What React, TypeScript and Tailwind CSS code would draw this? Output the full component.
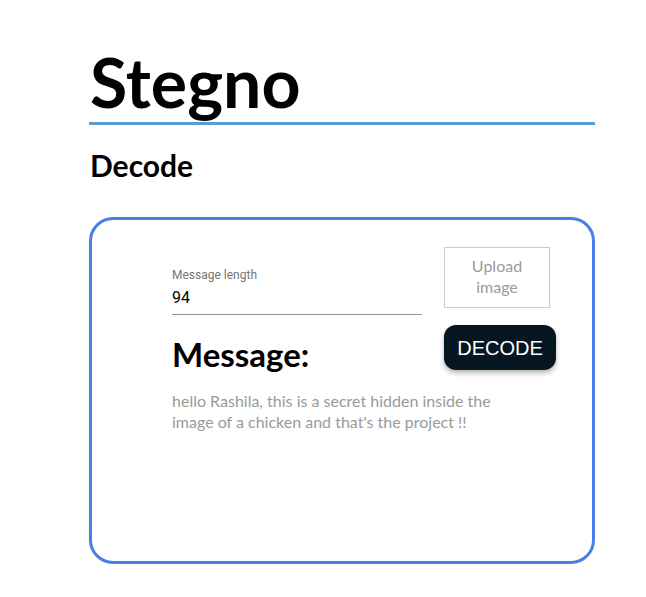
import React from 'react';

const segoe = { fontFamily: 'Lato, "Noto Sans", sans-serif' };

export default function App() {
  return (
    <div className="min-h-screen bg-white pl-[89px] pt-[48px]">
      <div className="w-[506px]">
        <h1
          className="border-b-[3px] border-[#5b9bd5] pb-[6px] pl-[1px] text-[68px] font-bold leading-[68px] text-black"
          style={segoe}
        >
          Stegno
        </h1>
        <h2 className="mt-[22px] pl-[1px] text-[30px] font-bold leading-[36px] text-black" style={segoe}>
          Decode
        </h2>

        <div className="mt-[34px] h-[347px] rounded-[24px] border-[3px] border-[#4a7fe5] pl-[80px] pt-[27px]">
          <div className="flex items-start gap-[22px]">
            <div className="w-[250px] pt-[21px]" style={{ fontFamily: 'Roboto, "Liberation Sans", sans-serif' }}>
              <label className="block text-[12px] leading-[14px] text-[#757575]">Message length</label>
              <input
                readOnly
                value="94"
                className="mt-[1px] block w-full border-b border-[#949494] bg-transparent pb-[6px] pt-[5px] text-[16px] leading-[20px] text-black outline-none"
              />
            </div>
            <button
              type="button"
              className="w-[106px] border border-[#cccccc] bg-white px-[16px] pb-[10px] pt-[7px] text-center text-[16px] leading-[21px] text-[#9a9a9a]"
              style={segoe}
            >
              Upload image
            </button>
          </div>

          <div className="flex items-start gap-[22px]">
            <h3 className="mt-[19px] w-[250px] text-[33px] font-bold leading-[40px] text-black" style={segoe}>
              Message:
            </h3>
            <button
              type="button"
              className="mt-[10px] flex h-[45px] w-[112px] items-center justify-center rounded-[12px] bg-[#061722] text-[20px] text-white shadow-[0_3px_5px_rgba(0,0,0,0.3)]"
              style={{ fontFamily: '"Liberation Sans", Arial, sans-serif' }}
            >
              DECODE
            </button>
          </div>

          <p className="mt-[16px] w-[345px] text-[16px] leading-[21px] text-[#9a9a9a]" style={segoe}>
            hello Rashila, this is a secret hidden inside the image of a chicken and that's the project !!
          </p>
        </div>
      </div>
    </div>
  );
}
